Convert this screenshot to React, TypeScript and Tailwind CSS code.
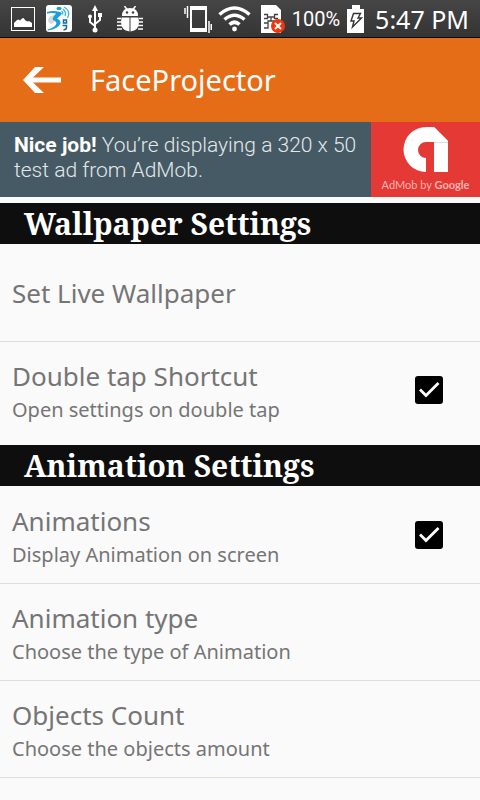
import clsx from "clsx";
import { useState } from "react";

type Setting = {
  id: string;
  title: string;
  summary?: string;
  checkable?: boolean;
};

type Section = {
  heading: string;
  settings: Setting[];
};

const sections: Section[] = [
  {
    heading: "Wallpaper Settings",
    settings: [
      { id: "wallpaper", title: "Set Live Wallpaper" },
      {
        id: "shortcut",
        title: "Double tap Shortcut",
        summary: "Open settings on double tap",
        checkable: true,
      },
    ],
  },
  {
    heading: "Animation Settings",
    settings: [
      {
        id: "animations",
        title: "Animations",
        summary: "Display Animation on screen",
        checkable: true,
      },
      {
        id: "type",
        title: "Animation type",
        summary: "Choose the type of Animation",
      },
      {
        id: "count",
        title: "Objects Count",
        summary: "Choose the objects amount",
      },
    ],
  },
];

const PictureIcon = () => (
  <svg width="24" height="24" viewBox="0 0 24 24" fill="none">
    <rect x="0.5" y="0.5" width="23" height="23" stroke="#fff" />
    <path
      d="M3 20v-4l3-3 1.500-.5 1.500 1 2-2 1.500-.5 2 2.500 2 1 1.500-.5L21 16v4z"
      fill="#fff"
    />
  </svg>
);

const RunnerIcon = () => (
  <svg width="26" height="27" viewBox="0 0 26 27" fill="none">
    <rect width="26" height="27" rx="3" fill="#fff" />
    <path d="M2 15q1-4 6-5l2 5-4 4q-4-1-4-4z" fill="#d5d9dc" />
    <ellipse cx="13" cy="3.500" rx="2.500" ry="1.800" fill="#1b9fd8" />
    <path
      d="M1 7q6-2 13 0 3 1 1 3l-4 3.500q4 2 3.500 5Q12 24 2 25.500l-.5-1Q10 22 10.500 18 10 16 7 15q-1-2 1-4l2-2.500Q6 7.500 1 8.500z"
      fill="#1b9fd8"
    />
    <path
      d="M16.500 9.500q1-2-1-3.500M19 11q1.500-4-2-7M21.500 13Q25 6 18 2"
      stroke="#3fb4e3"
      strokeWidth="1.300"
    />
    <path
      d="M17.500 15h3v3h-3zM16.500 20.500h4v2q0 2-3 2.500"
      stroke="#166a9c"
      strokeWidth="1.500"
    />
  </svg>
);

const UsbIcon = () => (
  <svg width="16" height="28" viewBox="0 0 16 28" fill="none">
    <path
      d="M7 4v20M7 21 2 17v-6M7 19l5-4v-5"
      stroke="#fff"
      strokeWidth="2"
    />
    <path d="M7 0l3 6H4z" fill="#fff" />
    <circle cx="7" cy="25" r="2.500" fill="#fff" />
    <circle cx="2" cy="11.500" r="2" fill="#fff" />
    <rect x="10" y="8" width="4" height="4" fill="#fff" />
  </svg>
);

const BugIcon = () => (
  <svg width="28" height="26" viewBox="0 0 28 26" fill="none">
    <path d="M8.500 0l2.500 3.500M19.500 0L17 3.500" stroke="#fff" strokeWidth="1.500" />
    <path d="M6 10q0-8 8-8t8 8z" fill="#fff" />
    <circle cx="11" cy="6.500" r="1.200" fill="#3c3c3c" />
    <circle cx="17" cy="6.500" r="1.200" fill="#3c3c3c" />
    <path
      d="M5.500 11.500h8v14Q5 24.500 5 16zM14.500 11.500h8L23 16q0 8.500-8.500 9.500z"
      fill="#fff"
    />
    <path
      d="M1 12.500h4M1 16h4M1 19.500h5M1 23h5M27 12.500h-4M27 16h-4M27 19.500h-5M27 23h-5"
      stroke="#fff"
      strokeWidth="1.500"
    />
  </svg>
);

const VibrateIcon = () => (
  <svg width="28" height="28" viewBox="0 0 28 28" fill="none">
    <path fillRule="evenodd" d="M6 1h17v26H6zM8 5v18h13V5z" fill="#fff" />
    <path
      d="M1 3v6M3.500 1v12M25 16v12M27.250 19v6"
      stroke="#fff"
      strokeWidth="1.500"
    />
  </svg>
);

const WifiIcon = () => (
  <svg width="33" height="26" viewBox="0 0 33 26" fill="none">
    <path
      d="M1.500 8.500q15-13 30 0M6.500 13.500q10-8.500 20 0M11.500 18.500q5-4.500 10 0"
      stroke="#fff"
      strokeWidth="3.600"
    />
    <circle cx="16.500" cy="23" r="2.400" fill="#fff" />
  </svg>
);

const SimIcon = () => (
  <svg width="24" height="28" viewBox="0 0 24 28" fill="none">
    <path d="M0 0h15l5 5v23H0z" fill="#fff" />
    <path
      d="M3 9.500h3.500v4H3M17 9.500h-3.500v4H17M6.500 12h7M3 18h4v-2h6v2h4M3 23h4v-5M10 16v-4"
      stroke="#444"
      strokeWidth="1.300"
    />
    <circle cx="17" cy="21" r="7" fill="#f5330b" />
    <path d="M14 18l6 6M20 18l-6 6" stroke="#fff" strokeWidth="2" />
  </svg>
);

const BatteryIcon = () => (
  <svg width="18" height="28" viewBox="0 0 18 28" fill="none">
    <path d="M5 0h8v4h4v24H0V4h5z" fill="#fff" />
    <path
      d="M6.500 8.500h7L11 13h3.500L5.500 22l1.500-6H4z"
      stroke="#333"
      strokeWidth="1.400"
    />
  </svg>
);

const AdMobIcon = () => (
  <svg width="46" height="46" viewBox="0 0 46 46" fill="none">
    <path d="M31 0 45 14v31H31z" fill="#fff" />
    <path
      d="M31 0h-8A22.500 22.500 0 0 0 23 45V31a8 8 0 0 1 0-16h22V14z"
      fill="#fff"
    />
    <path d="M31 15.500h14" stroke="#ddd" />
  </svg>
);

const StatusBar = () => (
  <div className="flex h-[38px] items-center justify-between border-b border-black bg-linear-to-b from-[#464646] to-[#343434] pr-[11px] pl-[11px] text-white">
    <div className="flex items-center gap-[11px]">
      <PictureIcon />
      <RunnerIcon />
      <div className="flex items-center gap-3 pl-[5px]">
        <UsbIcon />
        <BugIcon />
      </div>
    </div>
    <div className="flex items-center gap-1.5">
      <VibrateIcon />
      <WifiIcon />
      <div className="flex items-center gap-[7px] pl-1">
        <SimIcon />
        <span className="font-['Roboto'] text-xl leading-8">100%</span>
        <BatteryIcon />
      </div>
      <span className="pl-1 font-['Noto_Sans'] text-[25px] leading-8">
        5:47 PM
      </span>
    </div>
  </div>
);

const AdBanner = () => (
  <a
    href="#ad"
    className="flex h-[75px] bg-[#455a64] font-['Roboto'] text-[#e4e8ea]"
  >
    <p className="flex-1 pt-[11px] pl-3.5 text-[21px] leading-[25px] font-light">
      <b className="font-bold text-white">Nice job!</b> You’re displaying a 320 x
      50 test ad from AdMob.
    </p>
    <div className="flex w-[109px] flex-col items-center bg-[#e53935] pt-[5px]">
      <AdMobIcon />
      <span className="pt-1 font-['Lato'] text-[11px] leading-4 text-[#f9b4b0]">
        AdMob by <span className="font-bold">Google</span>
      </span>
    </div>
  </a>
);

const SettingRow = ({
  setting,
  divider,
}: {
  setting: Setting;
  divider: boolean;
}) => {
  const [checked, setChecked] = useState(true);

  const text = (
    <span className="flex flex-col">
      <span className="text-[26px] leading-10">{setting.title}</span>
      {setting.summary && (
        <span className="text-xl leading-7">{setting.summary}</span>
      )}
    </span>
  );

  return (
    <li
      className={clsx(
        "h-[97px] border-b",
        divider ? "border-[#dedede]" : "border-transparent"
      )}
    >
      {setting.checkable ? (
        <label
          htmlFor={setting.id}
          className="flex h-full items-center justify-between pr-[37px] pl-3"
        >
          {text}
          <span className="relative flex">
            <input
              id={setting.id}
              type="checkbox"
              checked={checked}
              onChange={(e) => setChecked(e.target.checked)}
              className="size-7 appearance-none rounded-[3px] border-2 border-black checked:bg-black"
            />
            {checked && (
              <svg
                viewBox="0 0 28 28"
                fill="none"
                className="pointer-events-none absolute inset-0"
              >
                <path
                  d="M5 13.500l6 6L23.500 7"
                  stroke="#fff"
                  strokeWidth="2.800"
                />
              </svg>
            )}
          </span>
        </label>
      ) : (
        <button
          type="button"
          className="flex h-full w-full items-center pl-3 text-left"
        >
          {text}
        </button>
      )}
    </li>
  );
};

const App = () => {
  return (
    <div className="min-h-screen bg-[#fafafa] font-['Noto_Sans',sans-serif] text-[#757575]">
      <StatusBar />

      {/* Toolbar */}
      <header className="flex h-[84px] items-center gap-7 bg-[#e66d18] pl-[22px] text-white">
        <button type="button" aria-label="Back">
          <svg width="40" height="28" viewBox="0 0 40 28" fill="none">
            <path
              d="M13 1h9L11 11.500h28v5H11L22 27h-9L1 14z"
              fill="#fff"
            />
          </svg>
        </button>
        <h1 className="text-[29px] leading-10">FaceProjector</h1>
      </header>

      <AdBanner />

      <main>
        {sections.map((section, i) => (
          <section key={section.heading} className="pt-1.5">
            <h2 className="bg-[#0e0e0e] pl-6 font-['Noto_Serif','Droid_Serif','DejaVu_Serif',serif] text-[30px] leading-[41px] font-bold text-white">
              {section.heading}
            </h2>
            <ul className="pt-px">
              {section.settings.map((setting, j) => (
                <SettingRow
                  key={setting.id}
                  setting={setting}
                  divider={
                    i === sections.length - 1 ||
                    j < section.settings.length - 1
                  }
                />
              ))}
            </ul>
          </section>
        ))}
      </main>
    </div>
  );
};

export default App;
